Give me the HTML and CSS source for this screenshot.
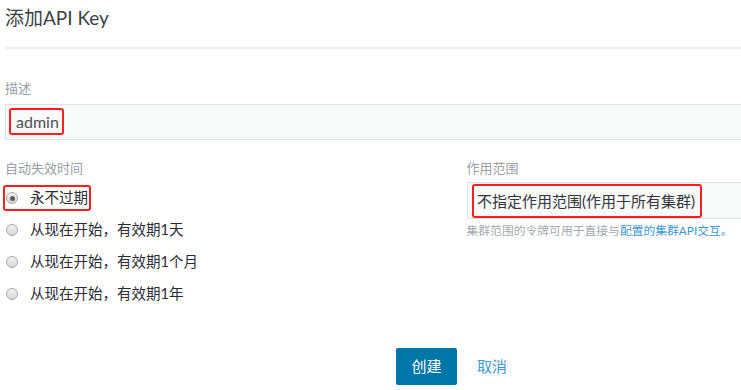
FILE: index.html
```html
<!DOCTYPE html>
<html lang="zh-CN">
<head>
<meta charset="utf-8">
<title>添加API Key</title>
<link rel="stylesheet" href="styles.css">
</head>
<body>
<div class="page">
  <header class="header">
    <h1 class="title">添加API Key</h1>
  </header>

  <div class="field">
    <label class="label">描述</label>
    <div class="input input-desc">
      <span class="mark mark-admin">admin</span>
    </div>
  </div>

  <div class="cols">
    <div class="col">
      <div class="label">自动失效时间</div>
      <div class="radios">
        <div class="radio-row"><span class="radio-wrap mark"><span class="radio checked"></span><span class="radio-text">永不过期</span></span></div>
        <div class="radio-row"><span class="radio-wrap"><span class="radio"></span><span class="radio-text">从现在开始，有效期1天</span></span></div>
        <div class="radio-row"><span class="radio-wrap"><span class="radio"></span><span class="radio-text">从现在开始，有效期1个月</span></span></div>
        <div class="radio-row"><span class="radio-wrap"><span class="radio"></span><span class="radio-text">从现在开始，有效期1年</span></span></div>
      </div>
    </div>
    <div class="col">
      <div class="label">作用范围</div>
      <div class="input input-scope">
        <span class="mark mark-scope">不指定作用范围(作用于所有集群)</span>
      </div>
      <p class="help">集群范围的令牌可用于直接与<span class="link">配置的集群API交互。</span></p>
    </div>
  </div>

  <div class="actions">
    <button class="btn btn-primary">创建</button>
    <button class="btn btn-link">取消</button>
  </div>
</div>
</body>
</html>
```

FILE: styles.css
```css
html, body {
  margin: 0;
  padding: 0;
  overflow: hidden;
  background: #ffffff;
}

body {
  font-family: Lato, "Noto Sans CJK SC", sans-serif;
  color: #333333;
  width: 741px;
  height: 390px;
}

.page {
  width: 893px;
  margin-left: 5px;
}

.header {
  padding-top: 7px;
  padding-bottom: 18px;
  border-bottom: 2px solid #eceeef;
}

.title {
  margin: 0;
  font-size: 19px;
  font-weight: 400;
  line-height: 22px;
  color: #3b3f45;
}

.field {
  margin-top: 30px;
}

.label {
  display: block;
  font-size: 13px;
  line-height: 18px;
  color: #9a9ea5;
  margin-bottom: 7px;
}

.input {
  box-sizing: border-box;
  background: #f8f9f9;
  border: 1px solid #dde1e3;
  display: flex;
  align-items: flex-start;
}

.input-desc {
  height: 36px;
  padding: 3px 3px 0;
}

.mark {
  border: 2px solid #fd1e1e;
  border-radius: 3px;
}

.mark-admin {
  font-size: 16px;
  line-height: 23px;
  padding: 0 3px 0 5px;
  color: #4b4f57;
}

.cols {
  display: grid;
  grid-template-columns: 1fr 1fr;
  column-gap: 30px;
  margin-top: 19px;
}

.cols .label {
  margin-bottom: 5px;
}

.radio-row {
  height: 32px;
  display: flex;
  align-items: center;
  margin-left: -2px;
}

.radio-wrap {
  display: inline-flex;
  align-items: center;
  height: 22px;
  padding: 0 1px 0 1px;
  border: 2px solid transparent;
}

.radio-wrap.mark {
  border-color: #fd1e1e;
}

.radio {
  box-sizing: border-box;
  width: 12px;
  height: 12px;
  border-radius: 50%;
  border: 1px solid #a9a9a9;
  background: linear-gradient(#f4f4f4, #d6d6d6);
  display: inline-flex;
  align-items: center;
  justify-content: center;
  margin-right: 12px;
  flex: none;
}

.radio.checked::after {
  content: "";
  width: 5px;
  height: 5px;
  border-radius: 50%;
  background: #5a5a5a;
}

.radio-text {
  font-size: 14.5px;
  line-height: 20px;
  color: #2a2a33;
}

.input-scope {
  height: 37px;
  margin-top: 3px;
  padding: 1px 0 0 4.5px;
}

.mark-scope {
  font-size: 15px;
  line-height: 30px;
  padding: 0 5px 0 3px;
  color: #33363c;
}

.help {
  margin: 4px 0 0;
  font-size: 11.8px;
  line-height: 16px;
  color: #a4a8ae;
}

.link {
  color: #3d98d3;
}

.actions {
  margin-top: 38px;
  display: flex;
  justify-content: center;
  gap: 20px;
}

.btn {
  font-family: Lato, "Noto Sans CJK SC", sans-serif;
  font-size: 15px;
  border: 0;
  margin: 0;
  height: 37px;
  line-height: 37px;
  cursor: pointer;
}

.btn-primary {
  width: 61px;
  padding: 0;
  background: #0075a8;
  color: #ffffff;
  border-radius: 2px;
}

.btn-link {
  background: transparent;
  color: #3d98d3;
  padding: 0;
}
```
